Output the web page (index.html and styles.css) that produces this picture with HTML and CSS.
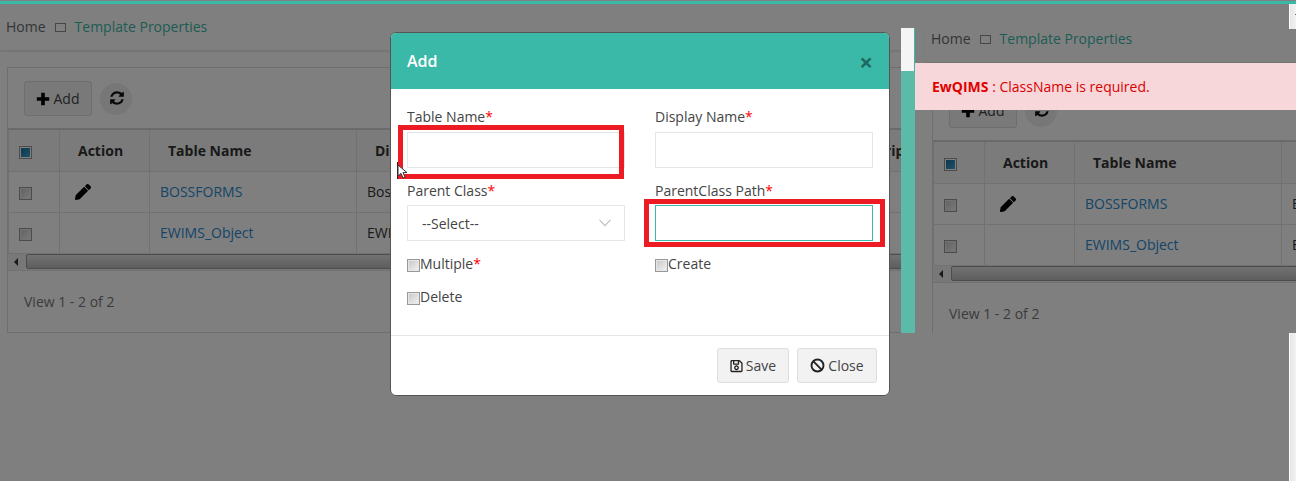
FILE: index.html
```html
<!DOCTYPE html>
<html lang="en">
<head>
<meta charset="utf-8">
<title>Template Properties</title>
<link rel="stylesheet" href="styles.css">
</head>
<body>
<svg class="defs" width="0" height="0" aria-hidden="true">
  <symbol id="i-pencil" viewBox="0 0 512 512"><path d="M497.9 142.1l-46.1 46.1c-4.7 4.7-12.3 4.7-17 0l-111-111c-4.7-4.7-4.7-12.3 0-17l46.1-46.1c18.7-18.7 49.1-18.7 67.9 0l60.1 60.1c18.8 18.7 18.8 49.1 0 67.9zM284.2 99.8L21.6 362.4.4 483.9c-2.9 16.4 11.4 30.6 27.8 27.8l121.5-21.3 262.6-262.6c4.7-4.7 4.7-12.3 0-17l-111-111c-4.8-4.7-12.4-4.7-17.1 0z"/></symbol>
  <symbol id="i-sync" viewBox="0 0 1792 1792"><path d="M1639 1056q0 5-1 7-64 268-268 434.5t-478 166.5q-146 0-282.5-55t-243.5-157l-129 129q-19 19-45 19t-45-19-19-45v-448q0-26 19-45t45-19h448q26 0 45 19t19 45-19 45l-137 137q71 66 161 102t187 36q134 0 250-65t186-179q11-17 53-117 8-23 30-23h192q13 0 22.5 9.5t9.5 22.5zm25-800v448q0 26-19 45t-45 19h-448q-26 0-45-19t-19-45 19-45l138-138q-148-137-349-137-134 0-250 65t-186 179q-11 17-53 117-8 23-30 23h-199q-13 0-22.5-9.5t-9.5-22.5v-7q65-268 270-434.5t480-166.5q146 0 284 55.5t245 156.5l130-129q19-19 45-19t45 19 19 45z"/></symbol>
  <symbol id="i-plus" viewBox="0 0 14 14"><path d="M5.2 0.8h3.6v4.4h4.4v3.6H8.8v4.4H5.2V8.8H0.8V5.2h4.4z"/></symbol>
</svg>

<div class="desktop">
  <div class="frame frame-left">
    <div class="page">
      <nav class="crumbs"><a class="crumb-home">Home</a><span class="crumb-sep"></span><a class="crumb-link">Template Properties</a></nav>
      <section class="panel">
        <div class="toolbar">
          <button class="btn-add" type="button"><svg class="ico-plus"><use href="#i-plus"/></svg>Add</button>
          <button class="btn-refresh" type="button" aria-label="Refresh"><svg class="ico-sync"><use href="#i-sync"/></svg></button>
        </div>
        <table class="grid">
          <thead><tr><th class="c-check"><span class="box box-on"></span></th><th class="c-action">Action</th><th class="c-name">Table Name</th><th class="c-display">Display Name</th><th class="c-desc">Description</th></tr></thead>
          <tbody>
            <tr><td class="c-check"><span class="box"></span></td><td class="c-edit"><svg class="ico-pencil"><use href="#i-pencil"/></svg></td><td class="c-link">BOSSFORMS</td><td>BossForms</td><td></td></tr>
            <tr><td class="c-check"><span class="box"></span></td><td></td><td class="c-link">EWIMS_Object</td><td>EWIMS_Object</td><td></td></tr>
          </tbody>
        </table>
        <div class="hscroll"><span class="hscroll-arrow"></span><span class="hscroll-thumb"></span></div>
        <p class="pager">View 1 - 2 of 2</p>
      </section>
    </div>
  </div>

  <div class="frame frame-right">
    <div class="page page-shift">
      <nav class="crumbs"><a class="crumb-home">Home</a><span class="crumb-sep"></span><a class="crumb-link">Template Properties</a></nav>
      <section class="panel">
        <div class="toolbar">
          <button class="btn-add" type="button"><svg class="ico-plus"><use href="#i-plus"/></svg>Add</button>
          <button class="btn-refresh" type="button" aria-label="Refresh"><svg class="ico-sync"><use href="#i-sync"/></svg></button>
        </div>
        <table class="grid">
          <thead><tr><th class="c-check"><span class="box box-on"></span></th><th class="c-action">Action</th><th class="c-name">Table Name</th><th class="c-display">Display Name</th><th class="c-desc">Description</th></tr></thead>
          <tbody>
            <tr><td class="c-check"><span class="box"></span></td><td class="c-edit"><svg class="ico-pencil"><use href="#i-pencil"/></svg></td><td class="c-link">BOSSFORMS</td><td>BossForms</td><td></td></tr>
            <tr><td class="c-check"><span class="box"></span></td><td></td><td class="c-link">EWIMS_Object</td><td>EWIMS_Object</td><td></td></tr>
          </tbody>
        </table>
        <div class="hscroll"><span class="hscroll-arrow"></span><span class="hscroll-thumb"></span></div>
        <p class="pager">View 1 - 2 of 2</p>
      </section>
    </div>
  </div>

  <div class="backdrop"></div>
  <div class="topbar"></div>
  <div class="edge edge-top"><span class="edge-mark"></span></div>
  <div class="edge edge-bottom"></div>
  <div class="strip"><div class="strip-thumb"></div></div>
  <div class="alert"><strong>EwQIMS</strong> : ClassName is required.</div>

  <div class="modal">
    <header class="modal-head"><h2 class="modal-title">Add</h2><span class="modal-x">×</span></header>
    <form class="modal-body">
      <div class="field"><label class="lbl">Table Name<em>*</em></label><input class="inp" type="text"></div>
      <div class="field"><label class="lbl">Display Name<em>*</em></label><input class="inp" type="text"></div>
      <div class="field field-low"><label class="lbl">Parent Class<em>*</em></label>
        <div class="inp select">--Select--<svg class="chev" viewBox="0 0 12 8"><path d="M0.5 0.8L6 6.6l5.5-5.8" fill="none" stroke="#b8bec6" stroke-width="1.1"/></svg></div>
      </div>
      <div class="field field-low"><label class="lbl">ParentClass Path<em>*</em></label><input class="inp inp-focus" type="text"></div>
      <div class="check"><span class="box box-form"></span>Multiple<em>*</em></div>
      <div class="check"><span class="box box-form"></span>Create</div>
      <div class="check"><span class="box box-form"></span>Delete</div>
    </form>
    <footer class="modal-foot">
      <button class="btn" type="button"><svg class="ico-btn" viewBox="0 0 448 512"><path d="M433.941 129.941l-83.882-83.882A48 48 0 0 0 316.118 32H48C21.49 32 0 53.49 0 80v352c0 26.51 21.49 48 48 48h352c26.51 0 48-21.49 48-48V163.882a48 48 0 0 0-14.059-33.941zM272 80v80H144V80h128zm122 352H54a6 6 0 0 1-6-6V86a6 6 0 0 1 6-6h42v104c0 13.255 10.745 24 24 24h176c13.255 0 24-10.745 24-24V83.882l78.243 78.243a6 6 0 0 1 1.757 4.243V426a6 6 0 0 1-6 6zM224 232c-48.523 0-88 39.477-88 88s39.477 88 88 88 88-39.477 88-88-39.477-88-88-88zm0 128c-22.056 0-40-17.944-40-40s17.944-40 40-40 40 17.944 40 40-17.944 40-40 40z"/></svg>Save</button>
      <button class="btn btn-close" type="button"><svg class="ico-ban" viewBox="0 0 24 24"><circle cx="12" cy="12" r="9.6" fill="none" stroke="#222" stroke-width="3"/><path d="M5.5 5.5l13 13" stroke="#222" stroke-width="3"/></svg>Close</button>
    </footer>
  </div>

  <div class="mark mark-name"></div>
  <div class="mark mark-path"></div>
  <svg class="pointer" viewBox="0 0 12 16"><path d="M1 1v11l3-2.6 2 4.6 2-1-2-4.4h4z" fill="#fff" stroke="#333" stroke-width="1"/></svg>
</div>
</body>
</html>
```
FILE: styles.css
```css
* { box-sizing: border-box; }
html, body { margin: 0; padding: 0; }
body { background: #fff; font-family: "Open Sans", "Liberation Sans", sans-serif; font-size: 14px; color: #676a6c; overflow: hidden; }
.defs { position: absolute; }
.desktop { position: relative; width: 1296px; height: 481px; overflow: hidden; background: #fff; }

/* two captured windows of the same page */
.frame { position: absolute; overflow: hidden; }
.frame-left { left: 0; top: 0; width: 901px; height: 481px; }
.frame-right { left: 915px; top: 28px; width: 381px; height: 305px; }
.page { width: 915px; padding-top: 4px; }
.page-shift { margin: -16px 0 0 10px; }

.crumbs { display: flex; align-items: center; height: 47px; padding: 0 0 1px 6px; border-bottom: 1px solid #e9e9e9; box-shadow: 0 1px 2px rgba(0,0,0,.08); }
.crumb-home { color: #676a6c; }
.crumb-sep { width: 11px; height: 9px; margin: 2px 9px 0 9px; border: 1px solid #8d8d8d; }
.crumb-link { color: #3ab9a8; }

.panel { width: 1000px; height: 266px; margin: 16px 0 0 7px; border: 1px solid #dcdcdc; }
.toolbar { display: flex; align-items: center; gap: 8px; height: 60px; padding: 1px 16px 0; }
.btn-add { display: flex; align-items: center; justify-content: center; gap: 4px; width: 68px; height: 35px; padding: 0 1px 0 0; background: #f2f2f2; border: 1px solid #ddd; border-radius: 3px; font: inherit; color: #444; }
.ico-plus { width: 14px; height: 14px; fill: #000; }
.btn-refresh { display: flex; align-items: center; justify-content: center; width: 32px; height: 32px; padding: 0 0 2px 1px; background: #eee; border: 0; border-radius: 50%; }
.ico-sync { width: 16px; height: 16px; fill: #111; }

.grid { width: 1000px; table-layout: fixed; border-collapse: collapse; border-top: 2px solid #d4d4d4; }
.grid th, .grid td { border: 1px solid #e2e2e2; padding: 0; text-align: left; overflow: hidden; white-space: nowrap; }
.grid thead tr { height: 42px; background: #f5f5f5; }
.grid tbody tr { height: 41px; }
.grid th { font-weight: 700; color: #333; background: #f7f7f7; }
.grid td { color: #333; padding-left: 10px; }
.grid th.c-check, .grid td.c-check { width: 51px; padding-left: 10px; }
.grid .c-action { width: 90px; padding-left: 18px; }
.grid .c-name { width: 207px; padding-left: 18px; }
.grid .c-display { width: 476px; padding-left: 18px; }
.grid .c-desc { width: 176px; padding-left: 19px; }
.grid .c-link { color: #2a8ad0; }
.grid .c-edit { padding-left: 15px; }
.ico-pencil { display: block; width: 16px; height: 16px; fill: #000; }

.box { display: inline-block; width: 13px; height: 13px; vertical-align: middle; border: 1px solid #999; background: linear-gradient(135deg, #c6c6c6, #f4f4f4); box-shadow: inset 0 0 0 1px #e6e6e6; }
.box-on { background: linear-gradient(135deg, #1a6a96, #3fa9de); box-shadow: inset 0 0 0 1px #fff; }

.hscroll { display: flex; align-items: center; gap: 8px; height: 17px; background: #f1f1f1; border-bottom: 1px solid #e2e2e2; }
.hscroll-arrow { width: 0; height: 0; margin-left: 6px; border: 4px solid transparent; border-right-color: #333; border-left: 0; }
.hscroll-thumb { flex: 1; height: 15px; border: 1px solid #999; border-radius: 2px; background: linear-gradient(#e4e4e4, #bcbcbc); }
.pager { margin: 21px 0 0 16px; line-height: 20px; color: #777; }

/* dim layer and what is above it */
.backdrop { position: absolute; inset: 0; background: rgba(0,0,0,.5); }
.topbar { position: absolute; left: 0; top: 1px; width: 100%; height: 3px; background: #3ab9a8; }
.edge { position: absolute; left: 1289px; width: 7px; background: linear-gradient(90deg, #e6e6e6, #f3f3f3); border-left: 1px solid #fff; }
.edge-top { top: 4px; height: 25px; }
.edge-bottom { top: 333px; height: 148px; }
.edge-mark { position: absolute; left: 5px; top: 10px; width: 2px; height: 1px; background: #666; }
.strip { position: absolute; left: 901px; top: 28px; width: 14px; height: 305px; background: #5cbaa8; }
.strip-thumb { width: 13px; height: 43px; background: #f5f5f5; box-shadow: 1px 0 0 #3ab9a8; }
.alert { position: absolute; left: 915px; top: 63px; width: 381px; height: 47px; padding: 0 17px; line-height: 47px; background: #f8d7da; color: #d80000; }
.alert strong { color: #e00000; }

.modal { position: absolute; left: 390px; top: 32px; width: 500px; height: 364px; display: flex; flex-direction: column; background: #fff; border: 1px solid #555; border-radius: 6px; overflow: hidden; }
.modal-head { display: flex; align-items: center; justify-content: space-between; height: 56px; padding: 0 16px; background: #3ab9a8; }
.modal-title { margin: 0; font-size: 16px; font-weight: 600; color: #fff; }
.modal-x { margin: 2px 0 0 0; font-size: 24px; font-weight: 700; line-height: 1; color: #1f6a60; }
.modal-body { flex: 1; display: grid; grid-template-columns: 218px 218px; column-gap: 30px; grid-auto-rows: min-content; align-content: start; padding: 18px 16px 0; }
.field { display: flex; flex-direction: column; height: 73px; }
.lbl { height: 20px; margin-bottom: 5px; line-height: 20px; color: #444; }
.field-low { height: 67px; }
.field-low .lbl { margin: 1px 0 4px; }
.lbl em, .check em { font-style: normal; color: #f00; }
.inp { display: block; flex: none; width: 218px; height: 36px; padding: 0 14px; border: 1px solid #e5e6e7; background: #fff; font: inherit; color: #444; outline: 0; }
.inp-focus { border-color: #3ab9a8; }
.select { display: flex; align-items: center; justify-content: space-between; }
.chev { width: 12px; height: 8px; margin-right: -1px; }
.check { display: flex; align-items: center; height: 33px; line-height: 20px; color: #444; }
.box-form { flex: none; margin-top: 3px; }
.modal-foot { display: flex; justify-content: flex-end; gap: 8px; height: 60px; padding: 12px 12px 0; border-top: 1px solid #e5e5e5; }
.btn { display: flex; align-items: center; justify-content: center; gap: 3px; width: 72px; height: 35px; padding: 0; background: #f2f2f2; border: 1px solid #ddd; border-radius: 3px; font: inherit; color: #444; }
.btn-close { width: 80px; }
.ico-btn { width: 13px; height: 14px; fill: #222; }
.ico-ban { width: 15px; height: 15px; }

/* annotations drawn on the screenshot */
.mark { position: absolute; border: 5px solid #ed1c24; }
.mark-name { left: 398px; top: 125px; width: 226px; height: 54px; }
.mark-name::before { content: ""; position: absolute; left: -6px; top: 32px; width: 1px; height: 17px; background: #222; }
.mark-path { left: 644px; top: 199px; width: 241px; height: 48px; }
.pointer { position: absolute; left: 397px; top: 164px; width: 12px; height: 16px; }
```
